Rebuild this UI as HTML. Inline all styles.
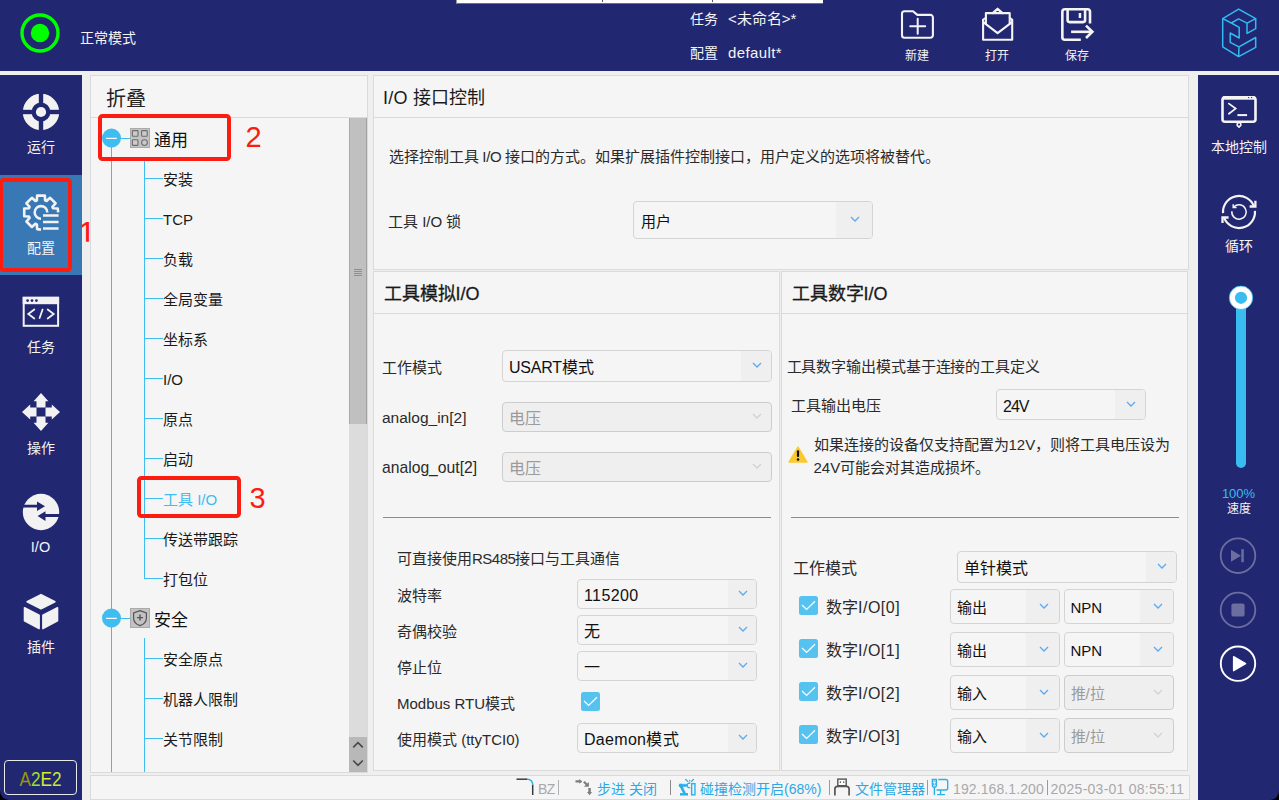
<!DOCTYPE html>
<html lang="zh-CN">
<head>
<meta charset="utf-8">
<title>I/O</title>
<style>
*{box-sizing:border-box;margin:0;padding:0}
html,body{width:1279px;height:800px;overflow:hidden}
body{position:relative;background:#efefef;font-family:"Liberation Sans",sans-serif;color:#222;font-size:15px}
.a{position:absolute}
.t{position:absolute;white-space:nowrap;line-height:24px;height:24px}
.navy{background:#222772}
.panel{position:absolute;background:#f5f5f5;border:1px solid #dadada}
.w{color:#f4f4f4}
.c{text-align:center}
.hl{position:absolute;height:1px;background:#dadada}
.sel{position:absolute;border:1px solid #d4d4d4;border-radius:4px;background:#f5f5f5;overflow:hidden}
.sel .b{position:absolute;right:0;top:0;bottom:0;background:#efefef}
.sel .v{position:absolute;white-space:nowrap;color:#111;font-size:16px}
.sel.dis{background:#efefef;border-color:#cdcdcd}
.sel.dis .v{color:#9b9b9b}
.cb{position:absolute;width:19px;height:19px;border-radius:2.5px;background:#56c2f0}
.tl{position:absolute;background:#3fbcf0}
.ti{position:absolute;left:163px;font-size:15px;line-height:24px;height:24px;white-space:nowrap;color:#1a1a1a}
.sb{position:absolute;font-size:14px;line-height:22px;height:22px;top:778px;white-space:nowrap}
.blue{color:#2aa9e6}
.gray{color:#a9a9a9}
.sep{position:absolute;top:780px;width:1px;height:15px;background:#8a8a8a}
</style>
</head>
<body>
<!-- HEADER -->
<div class="a navy" id="hdr" style="left:0;top:0;width:1279px;height:71px"></div>
<div class="a" style="left:456px;top:0;width:367px;height:4px;background:#fff;border-bottom:1px solid #6e6e82;border-left:1px solid #999"></div><div class="a" style="left:602px;top:0;width:1px;height:2px;background:#555"></div><div class="a" style="left:712px;top:0;width:1px;height:2px;background:#555"></div>
<!-- LEFT SIDEBAR -->
<div class="a navy" id="lsb" style="left:0;top:75px;width:82px;height:725px"></div>
<div class="a" style="left:0;top:175px;width:82px;height:100px;background:#3878b5"></div>
<!-- RIGHT SIDEBAR -->
<div class="a navy" id="rsb" style="left:1198px;top:75px;width:81px;height:725px"></div>
<!-- PANELS -->
<div class="panel" id="tree" style="left:90px;top:75px;width:278px;height:698px"></div>
<div class="panel" id="ptop" style="left:373px;top:75px;width:816px;height:195px"></div>
<div class="panel" id="pll" style="left:373px;top:271px;width:407px;height:500px"></div>
<div class="panel" id="plr" style="left:781px;top:271px;width:407px;height:500px"></div>
<div class="panel" id="status" style="left:90px;top:775px;width:1100px;height:25px"></div>
<!-- header content -->
<svg class="a" style="left:18px;top:11px" width="44" height="44" viewBox="0 0 44 44"><circle cx="22" cy="22" r="18" fill="none" stroke="#00ff00" stroke-width="3.4"/><circle cx="22" cy="22" r="9.2" fill="#00ff00"/></svg>
<div class="t w" style="left:80px;top:26px;font-size:14px">正常模式</div>
<div class="t w" style="left:690px;top:7px;font-size:14px">任务</div>
<div class="t w" style="left:728px;top:7px;font-size:15px">&lt;未命名&gt;*</div>
<div class="t w" style="left:690px;top:41px;font-size:14px">配置</div>
<div class="t w" style="left:728px;top:41px;font-size:15px;letter-spacing:0.400px">default*</div>
<!-- new -->
<svg class="a" style="left:897px;top:6px" width="40" height="38" viewBox="897 6 40 38" fill="none" stroke="#f4f4f4" stroke-width="2.100" stroke-linejoin="round" stroke-linecap="round"><path d="M902 13.700a2.500 2.500 0 0 1 2.500 -2.500h8.500l4.300 3.700h13.100a2.500 2.500 0 0 1 2.500 2.500v17.900a2.500 2.500 0 0 1 -2.500 2.500h-25.900a2.500 2.500 0 0 1 -2.500 -2.500z"/><path d="M910.200 26.300h15M917.700 18.800v15" stroke-width="2"/></svg>
<div class="t w c" style="left:887px;top:44px;width:60px;font-size:12px">新建</div>
<!-- open -->
<svg class="a" style="left:977px;top:4px" width="42" height="40" viewBox="977 4 42 40" fill="none" stroke="#f4f4f4" stroke-width="2.100" stroke-linejoin="round" stroke-linecap="round"><path d="M983.100 19.800V39.700H1012.200V19.800"/><path d="M983.100 19.800L985.900 17.600M1012.200 19.800L1009.700 17.600" stroke-width="1.800"/><path d="M983.600 22.300L997.600 33.200L1011.700 22.300"/><path d="M985.900 23.500V13.100H1009.700V23.500"/><path d="M992.800 13.100L997.600 8.800L1002.400 13.100" stroke-width="2.300"/></svg>
<div class="t w c" style="left:967px;top:44px;width:60px;font-size:12px">打开</div>
<!-- save -->
<svg class="a" style="left:1057px;top:4px" width="42" height="40" viewBox="1057 4 42 40" fill="none" stroke="#f4f4f4" stroke-width="2.600" stroke-linejoin="miter" stroke-linecap="butt"><path d="M1080.800 39.750H1064.850a2.500 2.500 0 0 1 -2.500 -2.500V11.750a2.500 2.500 0 0 1 2.500 -2.500H1087.500a2.500 2.500 0 0 1 2.500 2.500V23.400"/><path d="M1067.600 9.250V20.100a2 2 0 0 0 2 2H1083.100a2 2 0 0 0 2 -2V9.250"/><path d="M1079.950 13V18" stroke-width="2.500"/><path d="M1071.100 31.800H1092"/><path d="M1086 25.600L1092.400 31.800L1086 38"/></svg>
<div class="t w c" style="left:1047px;top:44px;width:60px;font-size:12px">保存</div>
<!-- logo -->
<svg class="a" style="left:1216px;top:4px" width="46" height="60" viewBox="1216 4 46 60" fill="none" stroke="#31bbf2" stroke-width="1.500" stroke-linejoin="round"><path d="M1238.600 9.100L1255.700 18.600L1247 23.200L1238.600 18.900L1231.300 23L1222.700 18.600Z"/><path d="M1222.700 18.600V46.800L1238.600 56.700L1255.700 47.400V37.500L1239 46.800L1238.600 56.700"/><path d="M1255.700 18.600V28.600L1247 33.400V23.200"/><path d="M1231.300 23L1239.200 27.400V38L1230.200 33V42.400L1239 46.800"/></svg>

<!-- left sidebar -->
<svg class="a" style="left:21px;top:92px" width="40" height="40" viewBox="21 92 40 40"><circle cx="41" cy="112" r="13.800" fill="none" stroke="#f2f2f2" stroke-width="8.800"/><rect x="38.800" y="92" width="4.400" height="40" fill="#222772"/><rect x="21" y="109.800" width="40" height="4.400" fill="#222772"/><circle cx="41" cy="112" r="5.1" fill="#f2f2f2"/></svg>
<div class="t w c" style="left:0;top:135px;width:82px;font-size:14px">运行</div>
<svg class="a" style="left:19px;top:190px" width="44" height="44" viewBox="19 190 44 44" fill="none" stroke="#f2f2f2" stroke-width="2.600" stroke-linejoin="round" stroke-linecap="butt"><path d="M58.20 212.40 L57.76 208.53 L53.01 208.27 L52.41 206.83 L55.59 203.29 L50.11 197.81 L46.57 200.99 L45.13 200.39 L44.87 195.64 L37.13 195.64 L36.87 200.39 L35.43 200.99 L31.89 197.81 L26.41 203.29 L29.59 206.83 L28.99 208.27 L24.24 208.53 L24.24 216.27 L28.99 216.53 L29.59 217.97 L26.41 221.51 L31.89 226.99 L35.43 223.81 L36.87 224.41 L37.13 229.16 L41.00 229.60"/><path d="M47.30 212.40 A6.30 6.30 0 1 0 41.00 218.70"/><path d="M43 215.6H58.6M43 222H58.6M43 228.4H58.6" stroke-width="2.5"/></svg>
<div class="t w c" style="left:0;top:236px;width:82px;font-size:14px">配置</div>
<svg class="a" style="left:20px;top:294px" width="42" height="36" viewBox="20 294 42 36"><rect x="23.7" y="297.8" width="34.4" height="28" fill="none" stroke="#f2f2f2" stroke-width="2"/><rect x="22.7" y="296.8" width="36.4" height="7.4" fill="#f2f2f2"/><circle cx="27.6" cy="300.6" r="1.4" fill="#222772"/><circle cx="32" cy="300.6" r="1.4" fill="#222772"/><circle cx="36.4" cy="300.6" r="1.4" fill="#222772"/><path d="M34.3 309.5L28.3 314L34.3 318.5M47.7 309.5L53.7 314L47.7 318.5M42.6 309.5L39.6 318" fill="none" stroke="#f2f2f2" stroke-width="1.8" stroke-linecap="round" stroke-linejoin="miter"/></svg>
<div class="t w c" style="left:0;top:335px;width:82px;font-size:14px">任务</div>
<svg class="a" style="left:20px;top:391px" width="42" height="42" viewBox="20 391 42 42" fill="#f2f2f2"><path transform="rotate(0 41 412)" d="M41 393L48.4 401.2H45.5V407.5H36.5V401.2H33.6Z"/><path transform="rotate(90 41 412)" d="M41 393L48.4 401.2H45.5V407.5H36.5V401.2H33.6Z"/><path transform="rotate(180 41 412)" d="M41 393L48.4 401.2H45.5V407.5H36.5V401.2H33.6Z"/><path transform="rotate(270 41 412)" d="M41 393L48.4 401.2H45.5V407.5H36.5V401.2H33.6Z"/></svg>
<div class="t w c" style="left:0;top:436px;width:82px;font-size:14px">操作</div>
<svg class="a" style="left:20px;top:492px" width="42" height="40" viewBox="20 492 42 40"><circle cx="41" cy="512" r="18.2" fill="#f2f2f2"/><path d="M22 504.8H37V501.6L45 506.2L37 511V507.6H22Z" fill="#222772"/><path d="M60 514.1H45.5V511.2L37.6 516L45.5 521V516.9H60Z" fill="#222772"/></svg>
<div class="t w c" style="left:-0.500px;top:534.500px;width:82px;font-size:14.500px">I/O</div>
<svg class="a" style="left:20px;top:590px" width="42" height="42" viewBox="20 590 42 42" fill="#f2f2f2" stroke="#f2f2f2" stroke-width="1.6" stroke-linejoin="round"><path d="M41 594.6L54.9 601.7L41 608.8L27.1 601.7Z"/><path d="M24.5 607.8L39.1 615.2V628.6L24.5 620.8Z"/><path d="M57.5 607.8L42.9 615.2V628.6L57.5 620.8Z"/></svg>
<div class="t w c" style="left:0;top:635px;width:82px;font-size:14px">插件</div>
<div class="a" style="left:0;top:790px;width:10px;height:10px;background:#000"></div><div class="a navy" style="left:0;top:782px;width:18px;height:18px;border-radius:0 0 0 9px"></div>
<div class="a" style="left:4px;top:760px;width:73px;height:35px;border:1px solid #e8e8e8;border-radius:4px"></div>
<div class="t c" style="left:4px;top:767px;width:73px;font-size:19.500px;transform:scaleX(0.880)"><span style="color:#98980a">A</span><span style="color:#9ee022">2</span><span style="color:#d8ea2e">E</span><span style="color:#c6e829">2</span></div>

<div class="a" style="left:-1px;top:178px;width:73px;height:94px;border:4px solid #fc1c10;border-radius:4.500px"></div>
<div class="t" style="left:77.700px;top:217px;width:20px;font-size:33px;line-height:34px;height:34px;color:#fc1c10;clip-path:inset(0 0 9.200px 4px)">1</div>

<!-- tree panel -->
<div class="t" style="left:106px;top:85.500px;font-size:20px;line-height:26px;height:26px;color:#222">折叠</div>
<div class="hl" style="left:91px;top:117px;width:276px"></div>
<div class="a" style="left:349px;top:118px;width:18px;height:654px;background:#dcdcdc"></div>
<div class="a" style="left:349px;top:118px;width:18px;height:306px;background:#c0c0c0;border-left:1px solid #a9a9a9;border-right:1px solid #a0a0a0"></div>
<div class="a" style="left:354px;top:269px;width:8px;height:1px;background:#8f8f8f"></div>
<div class="a" style="left:354px;top:271px;width:8px;height:1px;background:#8f8f8f"></div>
<div class="a" style="left:354px;top:273px;width:8px;height:1px;background:#8f8f8f"></div>
<div class="a" style="left:354px;top:275px;width:8px;height:1px;background:#8f8f8f"></div>
<div class="a" style="left:349px;top:737px;width:18px;height:35px;background:#b8b8b8"></div>
<svg class="a" style="left:349px;top:737px" width="18" height="35" viewBox="0 0 18 35" fill="none" stroke="#484848" stroke-width="1.600"><path d="M4.200 10.400L9 5.600L13.800 10.400M4.200 23.500L9 28.300L13.800 23.500"/></svg>
<div class="tl" style="left:111px;top:138px;width:1px;height:634px"></div>
<div class="tl" style="left:144px;top:160px;width:1px;height:419px"></div>
<div class="tl" style="left:144px;top:638px;width:1px;height:134px"></div>
<div class="tl" style="left:144px;top:178px;width:19px;height:1px"></div>
<div class="ti" style="top:168px">安装</div>
<div class="tl" style="left:144px;top:218px;width:19px;height:1px"></div>
<div class="ti" style="top:208px">TCP</div>
<div class="tl" style="left:144px;top:258px;width:19px;height:1px"></div>
<div class="ti" style="top:248px">负载</div>
<div class="tl" style="left:144px;top:298px;width:19px;height:1px"></div>
<div class="ti" style="top:288px">全局变量</div>
<div class="tl" style="left:144px;top:338px;width:19px;height:1px"></div>
<div class="ti" style="top:328px">坐标系</div>
<div class="tl" style="left:144px;top:378px;width:19px;height:1px"></div>
<div class="ti" style="top:368px">I/O</div>
<div class="tl" style="left:144px;top:418px;width:19px;height:1px"></div>
<div class="ti" style="top:408px">原点</div>
<div class="tl" style="left:144px;top:458px;width:19px;height:1px"></div>
<div class="ti" style="top:448px">启动</div>
<div class="tl" style="left:144px;top:498px;width:19px;height:1px"></div>
<div class="ti" style="top:488px;color:#3fbcf0">工具 I/O</div>
<div class="tl" style="left:144px;top:538px;width:19px;height:1px"></div>
<div class="ti" style="top:528px">传送带跟踪</div>
<div class="tl" style="left:144px;top:578px;width:19px;height:1px"></div>
<div class="ti" style="top:568px">打包位</div>
<div class="tl" style="left:144px;top:658px;width:19px;height:1px"></div>
<div class="ti" style="top:648px">安全原点</div>
<div class="tl" style="left:144px;top:698px;width:19px;height:1px"></div>
<div class="ti" style="top:688px">机器人限制</div>
<div class="tl" style="left:144px;top:738px;width:19px;height:1px"></div>
<div class="ti" style="top:728px">关节限制</div>
<div class="tl" style="left:112px;top:138px;width:18px;height:1px"></div><svg class="a" style="left:101px;top:128px" width="22" height="22" viewBox="0 0 22 22"><circle cx="10.500" cy="10.100" r="9.500" fill="#3fbcf0"/><rect x="5.100" y="9.750" width="10.700" height="1.250" fill="#f4fbff"/></svg><svg class="a" style="left:130px;top:128px" width="20" height="20" viewBox="0 0 20 20"><rect x="0.5" y="0.5" width="19" height="19" fill="#c3c3c3" stroke="#aaa"/><g fill="#cbcbcb" stroke="#6c6c6c" stroke-width="1.100"><rect x="2.400" y="2.600" width="5.600" height="5.600" rx="0.700"/><rect x="11.600" y="2.600" width="5.600" height="5.600" rx="0.700"/><rect x="2.400" y="11.800" width="5.600" height="5.600" rx="0.700"/><circle cx="14.500" cy="14.600" r="2.900"/></g></svg><div class="t" style="left:154px;top:128.5px;font-size:17px;color:#111">通用</div>
<div class="tl" style="left:112px;top:618px;width:18px;height:1px"></div><svg class="a" style="left:101px;top:608px" width="22" height="22" viewBox="0 0 22 22"><circle cx="10.500" cy="10.100" r="9.500" fill="#3fbcf0"/><rect x="5.100" y="9.750" width="10.700" height="1.250" fill="#f4fbff"/></svg><svg class="a" style="left:130px;top:608px" width="20" height="20" viewBox="0 0 20 20"><rect x="0.5" y="0.5" width="19" height="19" fill="#c3c3c3" stroke="#aaa"/><g fill="none" stroke="#555" stroke-width="1.2"><path d="M10 2.6L16.4 5V10.2C16.4 14 13.6 16.4 10 17.6C6.4 16.4 3.600 14 3.600 10.2V5Z"/><path d="M7 9.600H13M10 6.600V12.600" stroke-width="1.4"/></g></svg><div class="t" style="left:154px;top:608.5px;font-size:17px;color:#111">安全</div>
<div class="a" style="left:98px;top:114px;width:133px;height:47px;border:4px solid #fc1c10;border-radius:4.5px"></div>
<div class="t" style="left:245.5px;top:120.500px;font-size:29px;line-height:32px;height:32px;color:#fc1c10">2</div>
<div class="a" style="left:137px;top:476px;width:104px;height:42px;border:4px solid #fc1c10;border-radius:4.5px"></div>
<div class="t" style="left:249.5px;top:482px;font-size:29px;line-height:32px;height:32px;color:#fc1c10">3</div>

<!-- top panel -->
<div class="t" style="left:383px;top:86px;font-size:18px;color:#1a1a1a;letter-spacing:0.2px">I/O 接口控制</div>
<div class="hl" style="left:374px;top:117px;width:814px"></div>
<div class="t" style="left:388.5px;top:145px;font-size:15px;color:#2a2a2a">选择控制工具<span style="letter-spacing:-0.3px"> I/O </span>接口的方式。如果扩展插件控制接口，用户定义的选项将被替代。</div>
<div class="t" style="left:388px;top:209.5px;font-size:15px;color:#2a2a2a">工具 I/O 锁</div>
<div class="sel" style="left:633px;top:201px;width:240px;height:38px"><div class="b" style="width:36px"></div><div class="v" style="left:6.5px;top:2px;line-height:36px;font-size:15px;letter-spacing:0px">用户</div><svg class="a" style="left:215.0px;top:12.0px" width="12" height="10" viewBox="0 0 12 10" fill="none" stroke="#5aaaf0" stroke-width="1.3"><path d="M2 3L6 7L10 3"/></svg></div>
<!-- lower left -->
<div class="t" style="left:383.5px;top:282px;font-size:18px;color:#1a1a1a;-webkit-text-stroke:0.3px #1a1a1a">工具模拟I/O</div>
<div class="hl" style="left:374px;top:313px;width:405px"></div>
<div class="t" style="left:382px;top:355.5px;font-size:15px;color:#2a2a2a">工作模式</div>
<div class="sel" style="left:502px;top:350px;width:270px;height:32px"><div class="b" style="width:30px"></div><div class="v" style="left:6px;top:2px;line-height:30px;font-size:16px;letter-spacing:-0.2px">USART模式</div><svg class="a" style="left:248.0px;top:9.0px" width="12" height="10" viewBox="0 0 12 10" fill="none" stroke="#5aaaf0" stroke-width="1.3"><path d="M2 3L6 7L10 3"/></svg></div>
<div class="t" style="left:382px;top:406px;font-size:15.5px;color:#2a2a2a">analog_in[2]</div>
<div class="sel dis" style="left:502px;top:402px;width:270px;height:30px"><div class="v" style="left:5.5px;top:2px;line-height:28px;font-size:16px;letter-spacing:0px">电压</div><svg class="a" style="left:248.0px;top:8.0px" width="12" height="10" viewBox="0 0 12 10" fill="none" stroke="#d2d2d2" stroke-width="1.3"><path d="M2 3L6 7L10 3"/></svg></div>
<div class="t" style="left:382px;top:456px;font-size:15.7px;color:#2a2a2a">analog_out[2]</div>
<div class="sel dis" style="left:502px;top:452px;width:270px;height:30px"><div class="v" style="left:5.5px;top:2px;line-height:28px;font-size:16px;letter-spacing:0px">电压</div><svg class="a" style="left:248.0px;top:8.0px" width="12" height="10" viewBox="0 0 12 10" fill="none" stroke="#d2d2d2" stroke-width="1.3"><path d="M2 3L6 7L10 3"/></svg></div>
<div class="a" style="left:383px;top:517px;width:388px;height:1px;background:#8c8c8c"></div>
<div class="t" style="left:397px;top:547px;font-size:15px;color:#2a2a2a">可直接使用<span style="letter-spacing:-0.5px">RS485</span>接口与工具通信</div>
<div class="t" style="left:397px;top:583.5px;font-size:15px;color:#2a2a2a">波特率</div>
<div class="sel" style="left:577px;top:579px;width:180px;height:30px"><div class="b" style="width:28px"></div><div class="v" style="left:6px;top:2px;line-height:28px;font-size:16px;letter-spacing:0px"><span style="letter-spacing:0.4px">115200</span></div><svg class="a" style="left:159.0px;top:8.0px" width="12" height="10" viewBox="0 0 12 10" fill="none" stroke="#5aaaf0" stroke-width="1.3"><path d="M2 3L6 7L10 3"/></svg></div>
<div class="t" style="left:397px;top:619.5px;font-size:15px;color:#2a2a2a">奇偶校验</div>
<div class="sel" style="left:577px;top:615px;width:180px;height:30px"><div class="b" style="width:28px"></div><div class="v" style="left:6px;top:2px;line-height:28px;font-size:16px;letter-spacing:0px">无</div><svg class="a" style="left:159.0px;top:8.0px" width="12" height="10" viewBox="0 0 12 10" fill="none" stroke="#5aaaf0" stroke-width="1.3"><path d="M2 3L6 7L10 3"/></svg></div>
<div class="t" style="left:397px;top:655.5px;font-size:15px;color:#2a2a2a">停止位</div>
<div class="sel" style="left:577px;top:651px;width:180px;height:30px"><div class="b" style="width:28px"></div><div class="v" style="left:6px;top:2px;line-height:28px;font-size:16px;letter-spacing:0px">一</div><svg class="a" style="left:159.0px;top:8.0px" width="12" height="10" viewBox="0 0 12 10" fill="none" stroke="#5aaaf0" stroke-width="1.3"><path d="M2 3L6 7L10 3"/></svg></div>
<div class="t" style="left:397px;top:692px;font-size:15px;color:#2a2a2a">Modbus RTU模式</div>
<div class="cb" style="left:581px;top:692px"><svg width="19" height="19" viewBox="0 0 19 19" fill="none" stroke="#fff" stroke-width="1.250"><path d="M3 9L7.600 13.400L16 5.200"/></svg></div>
<div class="t" style="left:397px;top:727.5px;font-size:15px;color:#2a2a2a">使用模式 (ttyTCI0)</div>
<div class="sel" style="left:577px;top:723px;width:180px;height:30px"><div class="b" style="width:28px"></div><div class="v" style="left:6px;top:2px;line-height:28px;font-size:16px;letter-spacing:0.3px">Daemon模式</div><svg class="a" style="left:159.0px;top:8.0px" width="12" height="10" viewBox="0 0 12 10" fill="none" stroke="#5aaaf0" stroke-width="1.3"><path d="M2 3L6 7L10 3"/></svg></div>
<!-- lower right -->
<div class="t" style="left:791.5px;top:282px;font-size:18px;color:#1a1a1a;-webkit-text-stroke:0.3px #1a1a1a">工具数字I/O</div>
<div class="hl" style="left:782px;top:313px;width:405px"></div>
<div class="t" style="left:786.5px;top:355px;font-size:15px;color:#2a2a2a;letter-spacing:-0.1px">工具数字输出模式基于连接的工具定义</div>
<div class="t" style="left:791px;top:394px;font-size:15px;color:#2a2a2a">工具输出电压</div>
<div class="sel" style="left:996px;top:389px;width:150px;height:31px"><div class="b" style="width:30px"></div><div class="v" style="left:6px;top:1.5px;line-height:29px;font-size:16px;letter-spacing:-1px">24V</div><svg class="a" style="left:128.0px;top:8.5px" width="12" height="10" viewBox="0 0 12 10" fill="none" stroke="#5aaaf0" stroke-width="1.3"><path d="M2 3L6 7L10 3"/></svg></div>
<svg class="a" style="left:787px;top:445px" width="22" height="19" viewBox="787 445 22 19"><path d="M798 447L807 462H789Z" fill="#fbc92d" stroke="#fbc92d" stroke-width="1.4" stroke-linejoin="round"/><rect x="796.900" y="450.200" width="2.200" height="6.800" rx="1" fill="#111"/><circle cx="798" cy="459.600" r="1.250" fill="#111"/></svg>
<div class="t" style="left:813.5px;top:433px;font-size:15px;color:#2a2a2a">如果连接的设备仅支持配置为12V，则将工具电压设为</div>
<div class="t" style="left:813.5px;top:456px;font-size:15px;color:#2a2a2a">24V可能会对其造成损坏。</div>
<div class="a" style="left:791px;top:517px;width:388px;height:1px;background:#8c8c8c"></div>
<div class="t" style="left:793px;top:556.5px;font-size:16px;color:#2a2a2a">工作模式</div>
<div class="sel" style="left:957px;top:551px;width:220px;height:32px"><div class="b" style="width:30px"></div><div class="v" style="left:6px;top:2px;line-height:30px;font-size:16px;letter-spacing:0px">单针模式</div><svg class="a" style="left:198.0px;top:9.0px" width="12" height="10" viewBox="0 0 12 10" fill="none" stroke="#5aaaf0" stroke-width="1.3"><path d="M2 3L6 7L10 3"/></svg></div>
<div class="cb" style="left:799px;top:596.0px"><svg width="19" height="19" viewBox="0 0 19 19" fill="none" stroke="#fff" stroke-width="1.250"><path d="M3 9L7.600 13.400L16 5.200"/></svg></div>
<div class="t" style="left:826px;top:595.7px;font-size:16px;color:#2a2a2a">数字<span style="letter-spacing:0.5px">I/O[0]</span></div>
<div class="sel" style="left:950px;top:589px;width:110px;height:35px"><div class="b" style="width:33px"></div><div class="v" style="left:5.5px;top:0.5px;line-height:33px;font-size:15px;letter-spacing:0px">输出</div><svg class="a" style="left:86.5px;top:10.5px" width="12" height="10" viewBox="0 0 12 10" fill="none" stroke="#5aaaf0" stroke-width="1.3"><path d="M2 3L6 7L10 3"/></svg></div>
<div class="sel" style="left:1064px;top:589px;width:110px;height:35px"><div class="b" style="width:33px"></div><div class="v" style="left:5.5px;top:0.5px;line-height:33px;font-size:15px;letter-spacing:0px">NPN</div><svg class="a" style="left:86.5px;top:10.5px" width="12" height="10" viewBox="0 0 12 10" fill="none" stroke="#5aaaf0" stroke-width="1.3"><path d="M2 3L6 7L10 3"/></svg></div>
<div class="cb" style="left:799px;top:639.0px"><svg width="19" height="19" viewBox="0 0 19 19" fill="none" stroke="#fff" stroke-width="1.250"><path d="M3 9L7.600 13.400L16 5.200"/></svg></div>
<div class="t" style="left:826px;top:638.7px;font-size:16px;color:#2a2a2a">数字<span style="letter-spacing:0.5px">I/O[1]</span></div>
<div class="sel" style="left:950px;top:632px;width:110px;height:35px"><div class="b" style="width:33px"></div><div class="v" style="left:5.5px;top:0.5px;line-height:33px;font-size:15px;letter-spacing:0px">输出</div><svg class="a" style="left:86.5px;top:10.5px" width="12" height="10" viewBox="0 0 12 10" fill="none" stroke="#5aaaf0" stroke-width="1.3"><path d="M2 3L6 7L10 3"/></svg></div>
<div class="sel" style="left:1064px;top:632px;width:110px;height:35px"><div class="b" style="width:33px"></div><div class="v" style="left:5.5px;top:0.5px;line-height:33px;font-size:15px;letter-spacing:0px">NPN</div><svg class="a" style="left:86.5px;top:10.5px" width="12" height="10" viewBox="0 0 12 10" fill="none" stroke="#5aaaf0" stroke-width="1.3"><path d="M2 3L6 7L10 3"/></svg></div>
<div class="cb" style="left:799px;top:682.0px"><svg width="19" height="19" viewBox="0 0 19 19" fill="none" stroke="#fff" stroke-width="1.250"><path d="M3 9L7.600 13.400L16 5.200"/></svg></div>
<div class="t" style="left:826px;top:681.7px;font-size:16px;color:#2a2a2a">数字<span style="letter-spacing:0.5px">I/O[2]</span></div>
<div class="sel" style="left:950px;top:675px;width:110px;height:35px"><div class="b" style="width:33px"></div><div class="v" style="left:5.5px;top:0.5px;line-height:33px;font-size:15px;letter-spacing:0px">输入</div><svg class="a" style="left:86.5px;top:10.5px" width="12" height="10" viewBox="0 0 12 10" fill="none" stroke="#5aaaf0" stroke-width="1.3"><path d="M2 3L6 7L10 3"/></svg></div>
<div class="sel dis" style="left:1064px;top:675px;width:110px;height:35px"><div class="v" style="left:5.5px;top:0.5px;line-height:33px;font-size:15px;letter-spacing:0px">推/拉</div><svg class="a" style="left:86.5px;top:10.5px" width="12" height="10" viewBox="0 0 12 10" fill="none" stroke="#d2d2d2" stroke-width="1.3"><path d="M2 3L6 7L10 3"/></svg></div>
<div class="cb" style="left:799px;top:725.0px"><svg width="19" height="19" viewBox="0 0 19 19" fill="none" stroke="#fff" stroke-width="1.250"><path d="M3 9L7.600 13.400L16 5.200"/></svg></div>
<div class="t" style="left:826px;top:724.7px;font-size:16px;color:#2a2a2a">数字<span style="letter-spacing:0.5px">I/O[3]</span></div>
<div class="sel" style="left:950px;top:718px;width:110px;height:35px"><div class="b" style="width:33px"></div><div class="v" style="left:5.5px;top:0.5px;line-height:33px;font-size:15px;letter-spacing:0px">输入</div><svg class="a" style="left:86.5px;top:10.5px" width="12" height="10" viewBox="0 0 12 10" fill="none" stroke="#5aaaf0" stroke-width="1.3"><path d="M2 3L6 7L10 3"/></svg></div>
<div class="sel dis" style="left:1064px;top:718px;width:110px;height:35px"><div class="v" style="left:5.5px;top:0.5px;line-height:33px;font-size:15px;letter-spacing:0px">推/拉</div><svg class="a" style="left:86.5px;top:10.5px" width="12" height="10" viewBox="0 0 12 10" fill="none" stroke="#d2d2d2" stroke-width="1.3"><path d="M2 3L6 7L10 3"/></svg></div>

<!-- right sidebar -->
<svg class="a" style="left:1217px;top:92px" width="44" height="40" viewBox="1217 92 44 40" fill="none" stroke="#f4f4f4"><rect x="1222.500" y="97.300" width="33" height="24.500" rx="2.500" stroke-width="2.600"/><path d="M1223 98H1255" stroke-width="3.400"/><circle cx="1248.600" cy="97.600" r="0.700" fill="#222772" stroke="none"/><circle cx="1251.600" cy="97.600" r="0.700" fill="#222772" stroke="none"/><path d="M1228.900 103.600L1235.600 108.600L1228.900 113.700" stroke-width="1.800" stroke-linecap="round"/><path d="M1237.400 115.100H1247.100" stroke-width="2"/><circle cx="1239" cy="124.600" r="1.900" stroke-width="1.500"/><path d="M1239 126V128" stroke-width="1.500"/></svg>
<div class="t w c" style="left:1198px;top:135px;width:81px;font-size:14px">本地控制</div>
<svg class="a" style="left:1217px;top:190px" width="44" height="44" viewBox="1217 190 44 44" fill="none" stroke="#f4f4f4" stroke-width="2.200" stroke-linecap="butt"><path d="M1223.04 213.12A16 16 0 0 1 1253.94 206.27"/><path d="M1255.400 200.800V206.500H1249.600" stroke-width="2.300"/><path d="M1254.96 210.88A16 16 0 0 1 1224.06 217.73"/><path d="M1222.500 223V217.500H1228.600" stroke-width="2.300"/><path d="M1233.82 207.00A7.2 7.2 0 1 1 1231.84 211.25" stroke-width="1.500"/><path d="M1233.200 204.200V207.500H1236.600" stroke-width="1.500"/></svg>
<div class="t w c" style="left:1198px;top:234px;width:81px;font-size:14px">循环</div>
<div class="a" style="left:1236px;top:298px;width:10px;height:170px;background:#39bdf0;border-radius:0 0 5px 5px"></div>
<svg class="a" style="left:1227px;top:284px" width="28" height="28" viewBox="0 0 28 28"><circle cx="14" cy="13.800" r="11.700" fill="#fff" stroke="#39bdf0" stroke-width="0.800"/><circle cx="14" cy="13.800" r="6.100" fill="#39bdf0"/></svg>
<div class="t c" style="left:1198px;top:481.500px;width:81px;font-size:13px;color:#39bdf0">100%</div>
<div class="t w c" style="left:1198px;top:496.500px;width:81px;font-size:12px">速度</div>
<svg class="a" style="left:1218px;top:536px" width="40" height="40" viewBox="0 0 40 40"><circle cx="20" cy="19.700" r="17.300" fill="none" stroke="#6b6e9f" stroke-width="1.800"/><path d="M13 13.700L23 19.700L13 25.700Z" fill="#6b6e9f"/><rect x="23.300" y="13.200" width="2.500" height="13" fill="#6b6e9f"/></svg>
<svg class="a" style="left:1218px;top:590px" width="40" height="40" viewBox="0 0 40 40"><circle cx="20" cy="20" r="17.300" fill="none" stroke="#6b6e9f" stroke-width="1.800"/><rect x="13.400" y="13.400" width="13.200" height="13.200" rx="2.200" fill="#6b6e9f"/></svg>
<svg class="a" style="left:1218px;top:644px" width="40" height="40" viewBox="0 0 40 40"><circle cx="20" cy="19.700" r="17.200" fill="none" stroke="#fff" stroke-width="1.900"/><path d="M15.600 12.700L27.600 19.700L15.600 26.700Z" fill="#fff" stroke="#fff" stroke-width="1.400" stroke-linejoin="round"/></svg>
<div class="a" style="left:1269px;top:790px;width:20px;height:20px;background:#000"></div><div class="a navy" style="left:1259px;top:780px;width:20px;height:20px;border-radius:0 0 9px 0"></div>

<!-- status bar -->
<svg class="a" style="left:514px;top:777px" width="22" height="20" viewBox="514 777 22 20" fill="none"><path d="M516.500 779.200H527.500" stroke="#3a3a3a" stroke-width="1.500"/><path d="M532.700 784.500V795" stroke="#3a3a3a" stroke-width="1.500"/><path d="M527.500 779.200A5.200 5.200 0 0 1 532.700 784.500" stroke="#2ab0ea" stroke-width="1.500"/></svg>
<div class="sb gray" style="left:538px;letter-spacing:-0.500px">BZ</div>
<div class="sep" style="left:558px;background:#b0b0b0"></div>
<svg class="a" style="left:574px;top:777px" width="20" height="20" viewBox="574 777 20 20" fill="#7d7d7d" stroke="none"><path d="M575.500 780.300H579.300V779L582.400 781.400L579.300 783.800V782.600H575.500Z"/><path d="M583.100 782.500L584.700 780.900L587.300 783.500L588.900 781.900V786.800H584L585.700 785.100Z"/><path d="M588.300 788H590.800V792.100H592.100L589.550 795.200L587 792.100H588.300Z"/></svg>
<div class="sb blue" style="left:597px">步进 关闭</div>
<div class="sep" style="left:670px"></div>
<svg class="a" style="left:677px;top:776px" width="21" height="21" viewBox="677 776 21 21" fill="none" stroke="#2ab0ea"><rect x="691.650" y="783.650" width="3.300" height="11.200" stroke-width="1.400"/><path d="M685.700 779.500L687.700 781.400M693.400 779.500L691.600 781.400M689.700 780.300V781" stroke-width="1.300" stroke-linecap="round"/><path d="M680 794.300H688" stroke-width="2.500"/><path d="M684.600 793.300L680.600 785.600" stroke-width="2.600"/><path d="M679.500 784L687.400 784.500V786L680.500 787.300Z" fill="#2ab0ea" stroke-width="0.600"/><circle cx="680.400" cy="785.500" r="1.700" fill="#2ab0ea" stroke="none"/><path d="M690.300 783Q686.600 783.400 687.200 785.300Q686.600 787.500 690.300 787.900" stroke-width="1.300"/></svg>
<div class="sb blue" style="left:700px">碰撞检测开启(68%)</div>
<div class="sep" style="left:829px;background:#9a9a9a"></div>
<svg class="a" style="left:833px;top:777px" width="19" height="20" viewBox="833 777 19 20" fill="none" stroke="#555" stroke-width="1.700"><rect x="837.800" y="779.100" width="8.400" height="6.600" stroke-width="1.400" fill="#fafafa"/><path d="M834.900 795.500V789Q834.900 786.300 837.600 786.300H846.400Q849.100 786.300 849.100 789V795.500"/><rect x="839.800" y="781.300" width="1.200" height="1.700" fill="#666" stroke="none"/><rect x="843.100" y="781.300" width="1.200" height="1.700" fill="#666" stroke="none"/></svg>
<div class="sb blue" style="left:855px">文件管理器</div>
<div class="sep" style="left:927px;background:#9a9a9a"></div>
<svg class="a" style="left:930px;top:777px" width="20" height="20" viewBox="930 777 20 20" fill="none" stroke="#2ab0ea" stroke-width="1.400"><path d="M938.300 779.500H945.700Q947.700 779.500 947.700 781.500V788Q947.700 790 945.700 790H936.500"/><path d="M937 794.600H945M940.600 790V794.600"/><path d="M932.400 779.500H936.400V785.600Q936.400 787.200 934.800 787.200H934Q932.400 787.200 932.400 785.600Z"/><path d="M934.400 787.200V795"/><path d="M933.300 781.200H935.500" stroke-width="1"/><path d="M933.400 783V784.200Q933.400 785.200 934.400 785.200Q935.400 785.200 935.400 784.200V783" stroke-width="0.900"/></svg>
<div class="sb gray" style="left:953px;letter-spacing:0.100px">192.168.1.200</div>
<div class="sep" style="left:1047px;background:#9a9a9a"></div>
<div class="sb gray" style="left:1050.500px;letter-spacing:0.250px">2025-03-01 08:55:11</div>


</body>
</html>
